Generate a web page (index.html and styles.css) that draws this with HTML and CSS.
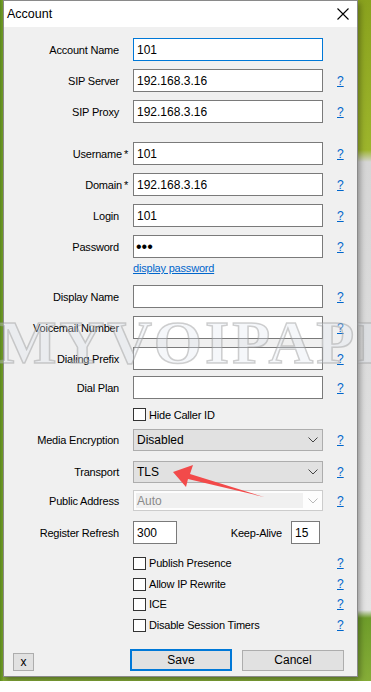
FILE: index.html
```html
<!DOCTYPE html>
<html lang="en">
<head>
  <meta charset="UTF-8">
  <meta name="viewport" content="width=device-width, initial-scale=1.0">
  <title>Account</title>
  <link rel="stylesheet" href="styles.css">
</head>
<body>
  <div class="desktop">
    <div class="dialog">
      <div class="titlebar">
        <span class="title">Account</span>
        <svg class="close" width="12" height="12" viewBox="0 0 12 12">
          <path d="M0.5 0.5 L11.5 11.5 M11.5 0.5 L0.5 11.5" stroke="#000" stroke-width="1.1" fill="none"/>
        </svg>
      </div>

      <div class="body">
        <div class="row">
          <label class="lbl">Account Name</label>
          <input class="field focus" type="text" value="101">
          <span></span>
        </div>
        <div class="row mt8">
          <label class="lbl">SIP Server</label>
          <input class="field" type="text" value="192.168.3.16">
          <a class="help" href="#">?</a>
        </div>
        <div class="row mt8">
          <label class="lbl">SIP Proxy</label>
          <input class="field" type="text" value="192.168.3.16">
          <a class="help" href="#">?</a>
        </div>

        <div class="row mt19">
          <label class="lbl req">Username<span class="star">*</span></label>
          <input class="field" type="text" value="101">
          <a class="help" href="#">?</a>
        </div>
        <div class="row mt8">
          <label class="lbl req">Domain<span class="star">*</span></label>
          <input class="field" type="text" value="192.168.3.16">
          <a class="help" href="#">?</a>
        </div>
        <div class="row mt8">
          <label class="lbl">Login</label>
          <input class="field" type="text" value="101">
          <a class="help" href="#">?</a>
        </div>
        <div class="row mt8">
          <label class="lbl">Password</label>
          <input class="field pass" type="password" value="101">
          <a class="help" href="#">?</a>
        </div>
        <div class="row link-row mt3">
          <span></span>
          <a class="show-pass" href="#">display password</a>
          <span></span>
        </div>

        <div class="row mt10">
          <label class="lbl">Display Name</label>
          <input class="field" type="text" value="">
          <a class="help" href="#">?</a>
        </div>
        <div class="row mt8">
          <label class="lbl">Voicemail Number</label>
          <input class="field" type="text" value="">
          <a class="help" href="#">?</a>
        </div>
        <div class="row mt8">
          <label class="lbl">Dialing Prefix</label>
          <input class="field" type="text" value="">
          <a class="help" href="#">?</a>
        </div>
        <div class="row mt6">
          <label class="lbl">Dial Plan</label>
          <input class="field" type="text" value="">
          <a class="help" href="#">?</a>
        </div>
        <div class="row check-row mt9">
          <span></span>
          <div class="check"><span class="box"></span>Hide Caller ID</div>
          <span></span>
        </div>

        <div class="row sel-row mt8">
          <label class="lbl">Media Encryption</label>
          <div class="select">
            <span>Disabled</span>
            <svg width="10" height="6" viewBox="0 0 10 6"><path d="M0.5 0.5 L5 5 L9.5 0.5" stroke="#444" fill="none"/></svg>
          </div>
          <a class="help" href="#">?</a>
        </div>
        <div class="row sel-row mt10">
          <label class="lbl">Transport</label>
          <div class="select">
            <span>TLS</span>
            <svg width="10" height="6" viewBox="0 0 10 6"><path d="M0.5 0.5 L5 5 L9.5 0.5" stroke="#444" fill="none"/></svg>
          </div>
          <a class="help" href="#">?</a>
        </div>
        <div class="row sel-row off mt7">
          <label class="lbl">Public Address</label>
          <div class="select disabled">
            <span class="val">Auto</span>
            <svg width="10" height="6" viewBox="0 0 10 6"><path d="M0.5 0.5 L5 5 L9.5 0.5" stroke="#b8b8b8" fill="none"/></svg>
          </div>
          <a class="help" href="#">?</a>
        </div>
        <div class="row mt10">
          <label class="lbl">Register Refresh</label>
          <div class="pair">
            <input class="field short" type="text" value="300">
            <label class="lbl ka">Keep-Alive</label>
            <input class="field tiny" type="text" value="15">
          </div>
          <span></span>
        </div>

        <div class="row check-row mt12">
          <span></span>
          <div class="check"><span class="box"></span>Publish Presence</div>
          <a class="help" href="#">?</a>
        </div>
        <div class="row check-row mt8">
          <span></span>
          <div class="check"><span class="box"></span>Allow IP Rewrite</div>
          <a class="help" href="#">?</a>
        </div>
        <div class="row check-row mt7">
          <span></span>
          <div class="check"><span class="box"></span>ICE</div>
          <a class="help" href="#">?</a>
        </div>
        <div class="row check-row mt8">
          <span></span>
          <div class="check"><span class="box"></span>Disable Session Timers</div>
          <a class="help" href="#">?</a>
        </div>

        <div class="footer">
          <button class="btn small">x</button>
          <button class="btn primary">Save</button>
          <button class="btn">Cancel</button>
        </div>
      </div>
    </div>

    <div class="watermark">MYVOIPAPP</div>

    <svg class="arrow" width="371" height="692" viewBox="0 0 371 692">
      <polygon points="173,472 193,465 190,474 264,497 188,479 186,487" fill="#f24a4a"/>
    </svg>
  </div>
</body>
</html>
```

FILE: styles.css
```css
body {
  margin: 0;
  background: #ffffff;
  font-family: "Liberation Sans", Arial, sans-serif;
}

.desktop {
  position: relative;
  width: 371px;
  height: 681px;
  overflow: hidden;
  background:
    linear-gradient(to right, #5c8c1e 0, #7ba62c 3px, transparent 3px),
    linear-gradient(to bottom, #8aa21e 0, #9db52c 150px, #d6d6d6 162px, #e4e4e4 610px, #6e9c2a 618px, #86ad38 100%);
}

.dialog {
  margin-left: 3px;
  width: 353px;
  height: 675px;
  border: 1px solid #8a8a8a;
  background: #f0f0f0;
  box-shadow: 2px 3px 6px rgba(0, 0, 0, 0.35);
}

.titlebar {
  height: 26px;
  background: #ffffff;
  display: flex;
  align-items: center;
  justify-content: space-between;
  padding: 0 8px 0 3px;
}

.title {
  font-size: 12.5px;
  color: #000;
}

.body {
  padding-top: 11px;
}

.row {
  display: grid;
  grid-template-columns: 115px 190px auto;
  column-gap: 14px;
  align-items: center;
  height: 23px;
}

.mt3 { margin-top: 3px; }
.mt6 { margin-top: 6px; }
.mt7 { margin-top: 7px; }
.mt8 { margin-top: 8px; }
.mt9 { margin-top: 9px; }
.mt10 { margin-top: 10px; }
.mt12 { margin-top: 12px; }
.mt19 { margin-top: 19px; }

.lbl {
  text-align: right;
  font-size: 11px;
  letter-spacing: -0.2px;
  color: #000;
  white-space: nowrap;
}

.lbl.req {
  margin-right: -9px;
}

.star {
  margin-left: 2px;
}

.field {
  box-sizing: border-box;
  height: 23px;
  width: 190px;
  border: 1px solid #7a7a7a;
  background: #fff;
  padding: 0 3px;
  margin: 0;
  font-family: "Liberation Sans", Arial, sans-serif;
  font-size: 12px;
  color: #000;
  outline: none;
}

.field.focus {
  border-color: #0078d7;
}

.field.pass {
  font-size: 16px;
  letter-spacing: 0;
  padding-left: 2px;
}

.help {
  font-size: 12px;
  color: #0066cc;
  text-decoration: underline;
}

.link-row {
  height: 14px;
}

.show-pass {
  font-size: 11px;
  letter-spacing: -0.2px;
  color: #0066cc;
  text-decoration: underline;
}

.check-row {
  height: 13px;
}

.check {
  display: flex;
  align-items: center;
  gap: 3px;
  font-size: 11px;
  letter-spacing: -0.2px;
  color: #000;
  white-space: nowrap;
}

.box {
  box-sizing: border-box;
  width: 13px;
  height: 13px;
  border: 1px solid #333;
  background: #fff;
}

.sel-row {
  height: 22px;
}

.sel-row.off {
  height: 21px;
}

.select {
  box-sizing: border-box;
  height: 100%;
  border: 1px solid #adadad;
  background: #e1e1e1;
  display: flex;
  align-items: center;
  justify-content: space-between;
  padding: 0 4px 0 3px;
  font-size: 12px;
  color: #000;
}

.select.disabled {
  border-color: #cccccc;
  background: #fdfdfd;
  padding: 2px 4px 2px 2px;
}

.select.disabled .val {
  flex: 0 0 166px;
  align-self: stretch;
  display: flex;
  align-items: center;
  padding-left: 1px;
  background: #f0f0f0;
  color: #8a8a8a;
}

.pair {
  display: flex;
  align-items: center;
}

.field.short {
  width: 44px;
}

.field.tiny {
  width: 29px;
}

.lbl.ka {
  margin-left: auto;
  margin-right: 9px;
}

.pair .field.tiny {
  margin-right: 3px;
}

.footer {
  display: flex;
  align-items: center;
  margin-top: 18px;
}

.btn {
  box-sizing: border-box;
  height: 21px;
  width: 102px;
  border: 1px solid #adadad;
  background: #e1e1e1;
  font-family: "Liberation Sans", Arial, sans-serif;
  font-size: 12px;
  color: #000;
  padding: 0;
  margin-left: 10px;
}

.btn.small {
  width: 21px;
  height: 18px;
  margin-left: 9px;
  margin-top: 3px;
}

.btn.primary {
  height: 22px;
  border: 2px solid #0078d7;
  margin-left: 96px;
}

.watermark {
  position: absolute;
  left: -2px;
  top: 311px;
  font-family: "Liberation Serif", "Times New Roman", serif;
  font-weight: bold;
  font-size: 62px;
  line-height: 62px;
  letter-spacing: 3px;
  color: rgba(222, 230, 240, 0.3);
  -webkit-text-stroke: 1.5px rgba(150, 150, 150, 0.45);
  white-space: nowrap;
  pointer-events: none;
}

.arrow {
  position: absolute;
  left: 0;
  top: 0;
  pointer-events: none;
}
```
